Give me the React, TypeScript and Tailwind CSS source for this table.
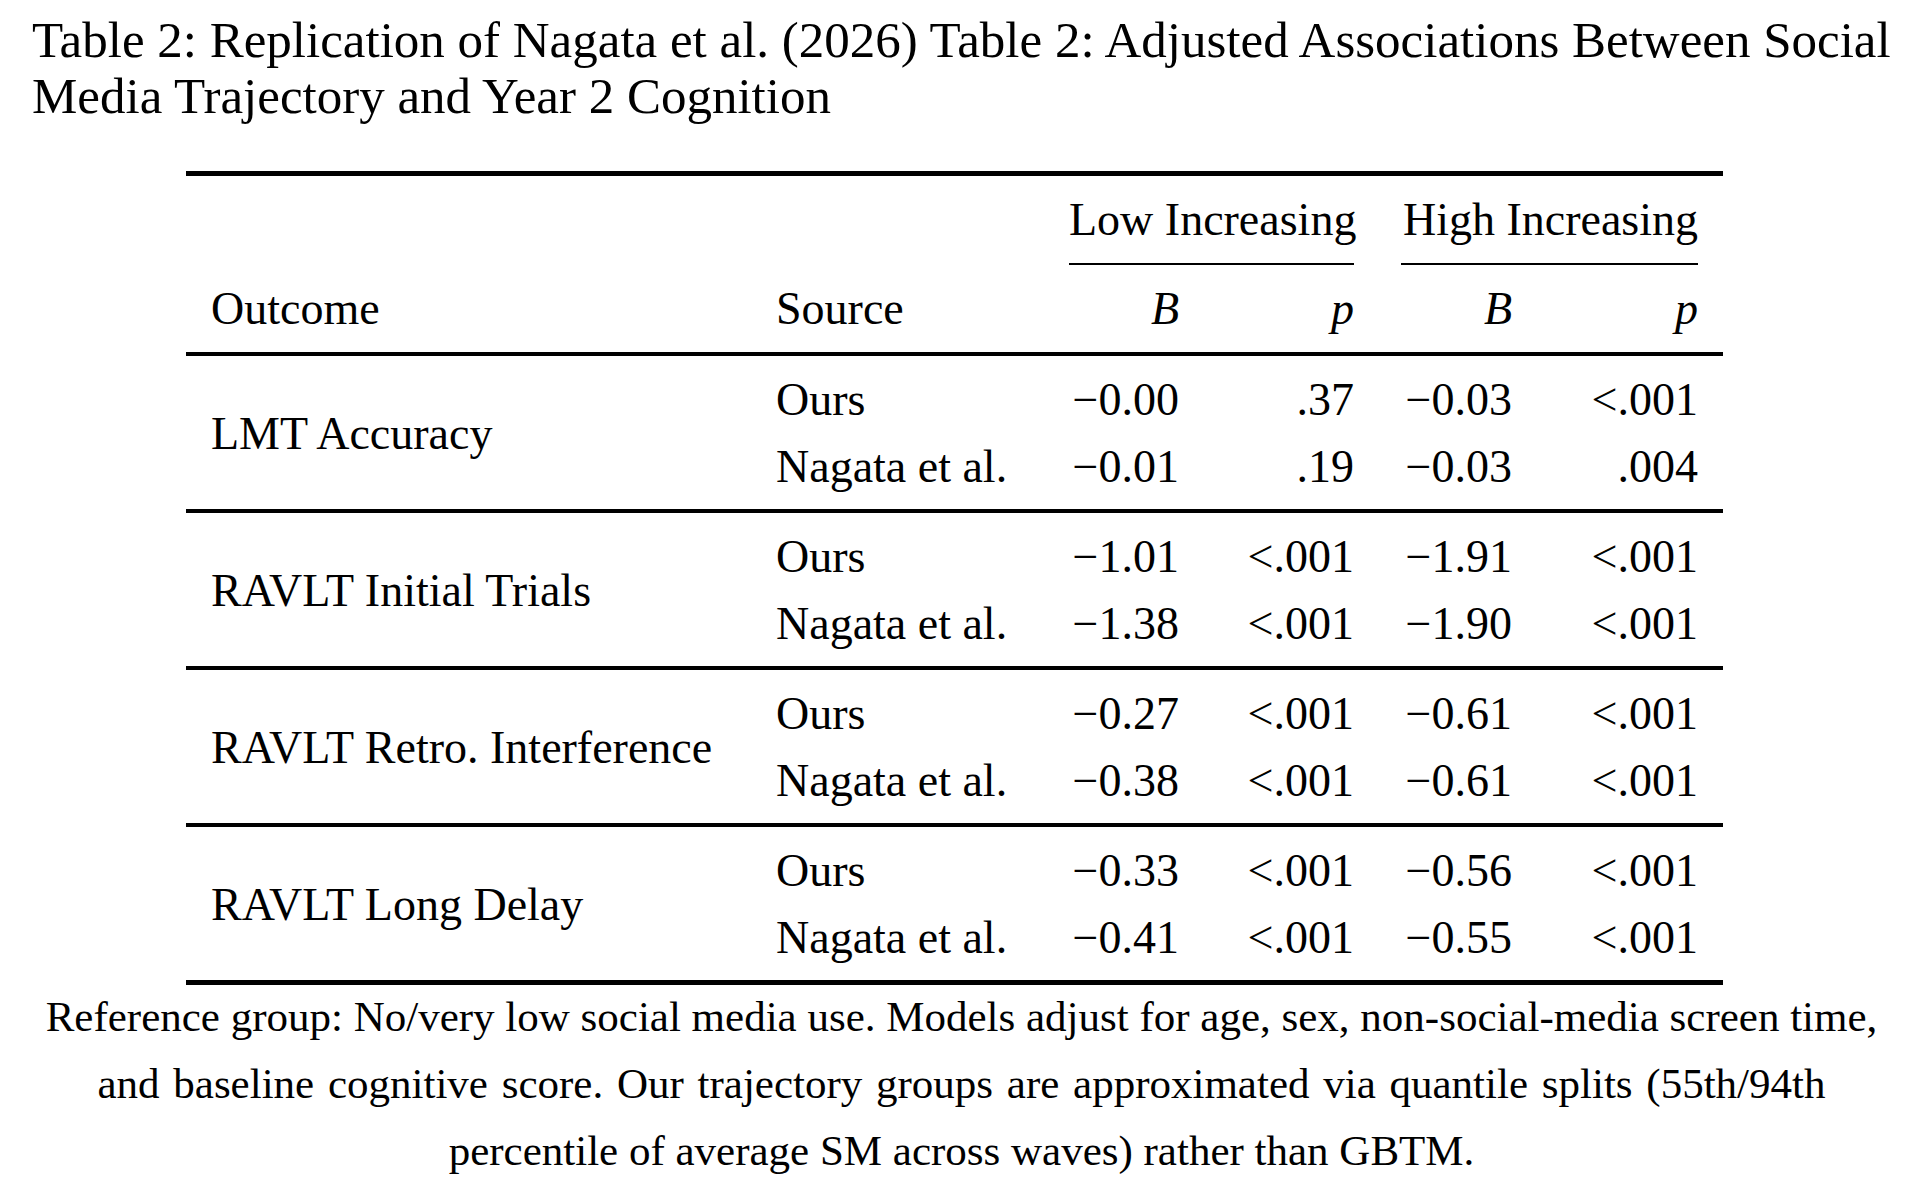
import React from "react";

const groups = [
    {
        outcome: "LMT Accuracy",
        ours: ["\u22120.00", ".37", "\u22120.03", "<.001"],
        nagata: ["\u22120.01", ".19", "\u22120.03", ".004"],
    },
    {
        outcome: "RAVLT Initial Trials",
        ours: ["\u22121.01", "<.001", "\u22121.91", "<.001"],
        nagata: ["\u22121.38", "<.001", "\u22121.90", "<.001"],
    },
    {
        outcome: "RAVLT Retro. Interference",
        ours: ["\u22120.27", "<.001", "\u22120.61", "<.001"],
        nagata: ["\u22120.38", "<.001", "\u22120.61", "<.001"],
    },
    {
        outcome: "RAVLT Long Delay",
        ours: ["\u22120.33", "<.001", "\u22120.56", "<.001"],
        nagata: ["\u22120.41", "<.001", "\u22120.55", "<.001"],
    },
];

// column grid shared by every row: outcome | source | B | p | B | p | trailing pad
const cols = "grid grid-cols-[590px_293px_110px_175px_158px_186px_25px]";

const Values = ({ vals }: { vals: string[] }) => (
    <>
        {vals.map((v, i) => (
            <div key={i} className="text-right whitespace-nowrap">
                {v}
            </div>
        ))}
    </>
);

const App = () => {
    return (
        <div className="min-h-screen w-full bg-white text-black font-['Liberation_Serif',serif]">
            <div className="pt-[12px] pl-[32px] text-[51px] leading-[56px] whitespace-nowrap">
                Table 2: Replication of Nagata et al. (2026) Table 2: Adjusted Associations Between Social
                <br />
                Media Trajectory and Year 2 Cognition
            </div>

            <div className="mt-[47px] mx-auto w-[1537px] text-[46px]">
                <div className="h-[5px] bg-black" />

                {/* spanner header */}
                <div className={cols + " h-[89px] leading-[87px]"}>
                    <div />
                    <div />
                    <div className="col-span-2">
                        <div className="border-b-2 border-black text-center whitespace-nowrap">
                            Low Increasing
                        </div>
                    </div>
                    <div className="col-span-2 flex justify-end">
                        <div className="w-[297px] border-b-2 border-black text-right whitespace-nowrap">
                            High Increasing
                        </div>
                    </div>
                    <div />
                </div>

                <div className={cols + " h-[87px] leading-[87px]"}>
                    <div className="pl-[25px]">Outcome</div>
                    <div>Source</div>
                    <div className="text-right italic">B</div>
                    <div className="text-right italic">p</div>
                    <div className="text-right italic">B</div>
                    <div className="text-right italic">p</div>
                    <div />
                </div>

                {groups.map((g, idx) => (
                    <div key={idx}>
                        <div className="h-[4px] bg-black" />
                        <div className={cols + " grid-rows-[67px_67px] pt-[10px] pb-[9px] leading-[67px]"}>
                            <div className="row-span-2 self-center pl-[25px] whitespace-nowrap">
                                {g.outcome}
                            </div>
                            <div>Ours</div>
                            <Values vals={g.ours} />
                            <div />
                            <div>Nagata et al.</div>
                            <Values vals={g.nagata} />
                            <div />
                        </div>
                    </div>
                ))}

                <div className="h-[5px] bg-black" />
            </div>

            <div className="-mt-[2px] pl-[14px] text-center text-[43px] leading-[67px]">
                Reference group: No/very low social media use. Models adjust for age, sex, non-social-media screen time,
                <br />
                <span className="[word-spacing:3px]">
                    and baseline cognitive score. Our trajectory groups are approximated via quantile splits (55th/94th
                </span>
                <br />
                percentile of average SM across waves) rather than GBTM.
            </div>
        </div>
    );
};

export default App;
